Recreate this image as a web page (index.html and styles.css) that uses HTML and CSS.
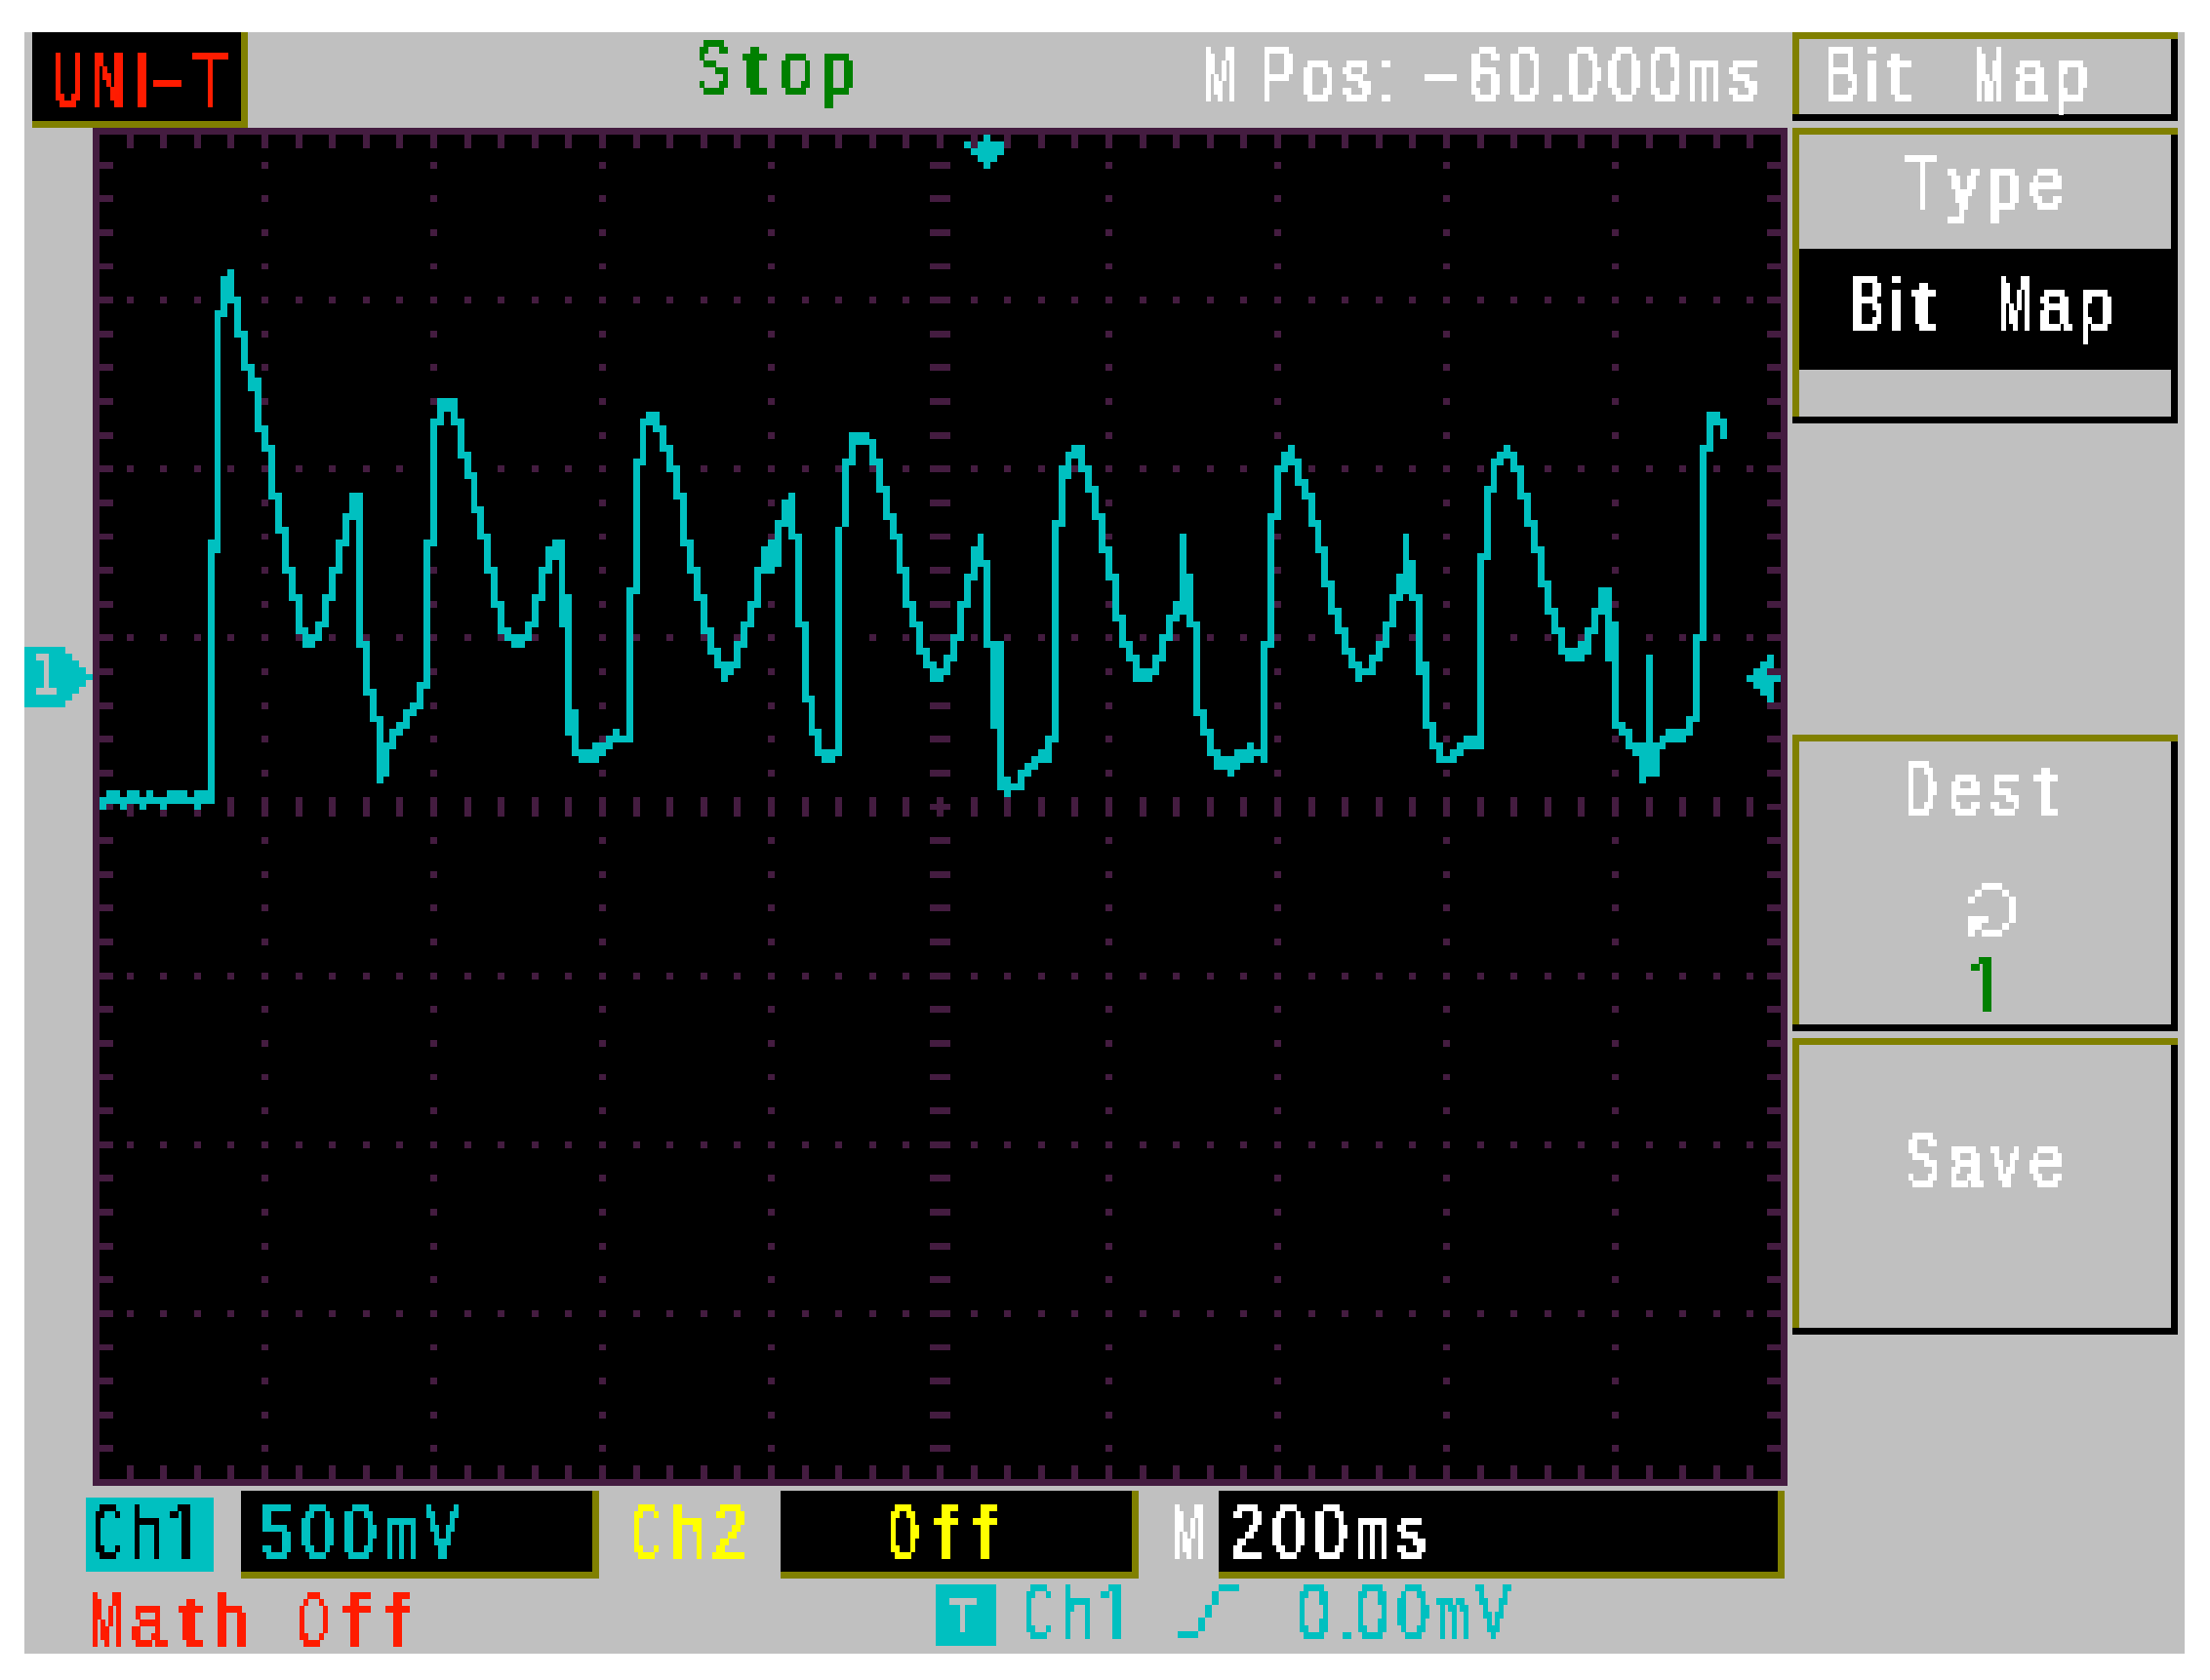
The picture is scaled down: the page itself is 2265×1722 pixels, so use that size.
FILE: index.html
```html
<!DOCTYPE html>
<html lang="en">
<head>
<meta charset="utf-8">
<title>UNI-T oscilloscope</title>
<link rel="stylesheet" href="styles.css">
</head>
<body>
<svg class="defs" width="0" height="0" aria-hidden="true">
  <filter id="px" x="0" y="0" width="100%" height="100%" color-interpolation-filters="sRGB" primitiveUnits="userSpaceOnUse">
    <feFlood x="1" y="6" width="1" height="1" flood-color="#000"/>
    <feComposite width="4" height="7"/>
    <feTile result="dots"/>
    <feComposite in="SourceGraphic" in2="dots" operator="in"/>
    <feComponentTransfer><feFuncA type="discrete" tableValues="0 1 1"/></feComponentTransfer>
    <feMorphology operator="dilate" radius="2 3"/>
  </filter>
</svg>
<main class="lcd">
  <div class="main-col">
    <header class="top">
      <div class="logo"><div class="txt logo-text"><span class="g"><span class="c w">U</span><span class="c w">N</span><span class="c li">I</span><span class="c d dl">-</span><span class="c tt">T</span></span></div></div>
      <div class="txt status"><span class="g roomy"><span class="c b">S</span><span class="c n">t</span>op</span></div>
      <div class="txt mpos"><span class="g"><span class="c m">M</span> <span class="c b">P</span>os: <span class="c d">-</span>60<span class="c dot">.</span>000<span class="c m">m</span>s</span></div>
    </header>
    <div class="scope">
      <svg class="screen" viewBox="10 14 251 201" preserveAspectRatio="none" shape-rendering="crispEdges">
        <rect class="bg" x="10" y="14" width="251" height="201"/>
        <path class="wave-fill" d="M142 15h1v1h-1zM139 16h7v1h-7zM140 17h5v1h-5zM141 18h3v1h-3zM142 19h1v1h-1zM255 95h5v1h-5zM256 94h3v3h-3zM257 93h2v5h-2zM258 92h1v7h-1z"/>
        <rect class="frame" x="10.5" y="14.5" width="250" height="200"/>
        <path class="g1" d="M35.5 19V210M60.5 19V210M85.5 19V210M110.5 19V210M160.5 19V210M185.5 19V210M210.5 19V210M235.5 19V210M15 39.5H256M15 64.5H256M15 89.5H256M15 139.5H256M15 164.5H256M15 189.5H256"/>
        <path class="g2" d="M15 16H256M15 213H256M12 19V210M259 19V210"/>
        <path class="g3" d="M15 114.5H256M135.5 19V210"/>
        <path class="wave-fill" d="M11 113h1v2h-1zM12 112h1v2h-1zM13 112h1v2h-1zM14 113h1v2h-1zM15 112h1v2h-1zM16 112h1v2h-1zM17 113h1v2h-1zM18 112h1v2h-1zM19 113h1v1h-1zM20 113h1v2h-1zM21 112h1v2h-1zM22 112h1v2h-1zM23 112h1v2h-1zM24 113h1v1h-1zM25 112h1v3h-1zM26 112h1v2h-1zM27 75h1v39h-1zM28 41h1v36h-1zM29 36h1v6h-1zM30 35h1v5h-1zM31 39h1v6h-1zM32 44h1v6h-1zM33 49h1v4h-1zM34 51h1v8h-1zM35 58h1v4h-1zM36 61h1v8h-1zM37 68h1v6h-1zM38 73h1v7h-1zM39 79h1v5h-1zM40 83h1v6h-1zM41 88h1v3h-1zM42 89h1v2h-1zM43 87h1v3h-1zM44 83h1v5h-1zM45 79h1v5h-1zM46 75h1v5h-1zM47 71h1v5h-1zM48 68h1v4h-1zM49 68h1v23h-1zM50 90h1v8h-1zM51 97h1v5h-1zM52 101h1v10h-1zM53 105h1v5h-1zM54 103h1v3h-1zM55 102h1v2h-1zM56 100h1v3h-1zM57 99h1v2h-1zM58 96h1v4h-1zM59 75h1v22h-1zM60 57h1v19h-1zM61 54h1v4h-1zM62 54h1v2h-1zM63 54h1v4h-1zM64 57h1v6h-1zM65 62h1v4h-1zM66 65h1v6h-1zM67 70h1v5h-1zM68 74h1v6h-1zM69 79h1v6h-1zM70 84h1v5h-1zM71 88h1v2h-1zM72 89h1v2h-1zM73 89h1v2h-1zM74 87h1v3h-1zM75 83h1v5h-1zM76 79h1v5h-1zM77 76h1v4h-1zM78 75h1v3h-1zM79 75h1v13h-1zM80 83h1v21h-1zM81 100h1v7h-1zM82 106h1v2h-1zM83 106h1v2h-1zM84 105h1v3h-1zM85 105h1v2h-1zM86 104h1v2h-1zM87 103h1v2h-1zM88 104h1v1h-1zM89 82h1v23h-1zM90 63h1v20h-1zM91 57h1v7h-1zM92 56h1v2h-1zM93 56h1v3h-1zM94 58h1v4h-1zM95 61h1v4h-1zM96 64h1v5h-1zM97 68h1v8h-1zM98 75h1v5h-1zM99 79h1v5h-1zM100 83h1v6h-1zM101 88h1v4h-1zM102 91h1v3h-1zM103 93h1v3h-1zM104 93h1v2h-1zM105 90h1v4h-1zM106 87h1v4h-1zM107 84h1v4h-1zM108 79h1v6h-1zM109 76h1v4h-1zM110 75h1v5h-1zM111 72h1v7h-1zM112 69h1v4h-1zM113 68h1v7h-1zM114 74h1v14h-1zM115 87h1v12h-1zM116 98h1v6h-1zM117 103h1v4h-1zM118 106h1v2h-1zM119 106h1v2h-1zM120 73h1v34h-1zM121 63h1v10h-1zM122 59h1v5h-1zM123 59h1v2h-1zM124 59h1v2h-1zM125 60h1v4h-1zM126 63h1v5h-1zM127 67h1v5h-1zM128 71h1v4h-1zM129 74h1v6h-1zM130 79h1v6h-1zM131 84h1v4h-1zM132 87h1v5h-1zM133 91h1v3h-1zM134 93h1v3h-1zM135 94h1v2h-1zM136 92h1v3h-1zM137 89h1v4h-1zM138 84h1v6h-1zM139 80h1v5h-1zM140 76h1v5h-1zM141 74h1v5h-1zM142 78h1v13h-1zM143 90h1v13h-1zM144 90h1v22h-1zM145 110h1v3h-1zM146 111h1v1h-1zM147 109h1v3h-1zM148 108h1v2h-1zM149 107h1v2h-1zM150 106h1v2h-1zM151 104h1v4h-1zM152 72h1v33h-1zM153 64h1v9h-1zM154 62h1v4h-1zM155 61h1v2h-1zM156 61h1v4h-1zM157 64h1v4h-1zM158 67h1v5h-1zM159 71h1v6h-1zM160 76h1v5h-1zM161 80h1v7h-1zM162 86h1v5h-1zM163 90h1v3h-1zM164 92h1v4h-1zM165 94h1v2h-1zM166 94h1v2h-1zM167 92h1v3h-1zM168 89h1v4h-1zM169 86h1v4h-1zM170 84h1v3h-1zM171 74h1v12h-1zM172 80h1v8h-1zM173 87h1v14h-1zM174 100h1v4h-1zM175 103h1v4h-1zM176 106h1v3h-1zM177 107h1v2h-1zM178 107h1v3h-1zM179 106h1v3h-1zM180 106h1v2h-1zM181 105h1v3h-1zM182 106h1v1h-1zM183 90h1v18h-1zM184 71h1v20h-1zM185 64h1v8h-1zM186 62h1v3h-1zM187 61h1v3h-1zM188 63h1v4h-1zM189 66h1v3h-1zM190 68h1v5h-1zM191 72h1v5h-1zM192 76h1v6h-1zM193 81h1v5h-1zM194 85h1v4h-1zM195 88h1v4h-1zM196 91h1v3h-1zM197 93h1v3h-1zM198 94h1v1h-1zM199 92h1v3h-1zM200 90h1v3h-1zM201 87h1v4h-1zM202 83h1v5h-1zM203 80h1v4h-1zM204 74h1v9h-1zM205 78h1v6h-1zM206 83h1v12h-1zM207 93h1v10h-1zM208 102h1v4h-1zM209 105h1v3h-1zM210 107h1v1h-1zM211 106h1v2h-1zM212 105h1v2h-1zM213 104h1v2h-1zM214 104h1v2h-1zM215 77h1v29h-1zM216 67h1v11h-1zM217 63h1v5h-1zM218 62h1v2h-1zM219 61h1v2h-1zM220 62h1v3h-1zM221 64h1v5h-1zM222 68h1v5h-1zM223 72h1v5h-1zM224 76h1v6h-1zM225 81h1v5h-1zM226 85h1v4h-1zM227 88h1v4h-1zM228 91h1v2h-1zM229 91h1v2h-1zM230 90h1v3h-1zM231 88h1v4h-1zM232 85h1v4h-1zM233 82h1v4h-1zM234 82h1v11h-1zM235 87h1v16h-1zM236 102h1v2h-1zM237 103h1v3h-1zM238 105h1v2h-1zM239 105h1v6h-1zM240 92h1v18h-1zM241 105h1v5h-1zM242 104h1v2h-1zM243 103h1v2h-1zM244 103h1v2h-1zM245 103h1v2h-1zM246 101h1v3h-1zM247 89h1v13h-1zM248 61h1v29h-1zM249 56h1v6h-1zM250 56h1v2h-1zM251 57h1v3h-1z"/>
      </svg>
      <div class="ch-marker">
        <svg class="ch-shape" viewBox="0 0 10 9" preserveAspectRatio="none" shape-rendering="crispEdges"><path class="wave-fill" d="M0 0h6v1h1v1h1v1h1v1h1v1h-1v1h-1v1h-1v1h-1v1H0z"/></svg>
        <div class="txt ch-num"><span class="g">1</span></div>
      </div>
    </div>
    <div class="readouts">
      <div class="row1">
        <div class="badge"><div class="txt tight"><span class="g ch"><span class="c w">C</span>h<span class="r">1</span></span></div></div>
        <div class="box box-v"><div class="txt cy v500"><span class="g roomy"><span>500</span><span class="c m">m</span><span class="c b">V</span></span></div></div>
        <div class="txt ye ch2"><span class="g"><span class="c w">C</span>h2</span></div>
        <div class="box box-off"><div class="txt ye off"><span class="g"><span class="c o">O</span><span class="c n">f</span><span class="c n">f</span></span></div></div>
        <div class="txt wh mlabel"><span class="g"><span class="c m">M</span></span></div>
        <div class="box box-t"><div class="txt wh t200"><span class="g roomy">200<span class="c m">m</span>s</span></div></div>
      </div>
      <div class="row2">
        <div class="txt rd math"><span class="g roomy"><span class="c m">M</span>a<span class="c n">t</span>h <span class="c o">O</span><span class="c n">f</span><span class="c n">f</span></span></div>
        <div class="tbox"><div class="txt tglyph"><span class="g">T</span></div></div>
        <div class="txt cy trig-ch"><span class="g ch"><span class="c w">C</span>h<span class="r">1</span></span></div>
        <svg class="edge" viewBox="0 0 9 8" preserveAspectRatio="none" shape-rendering="crispEdges"><path class="wave-fill" d="M6 0h3v1H6zM5 1h1v2H5zM4 3h1v2H4zM3 5h1v2H3zM0 7h3v1H0z"/></svg>
        <div class="txt cy trig-v"><span class="g">0<span class="c dot">.</span>00<span class="c m">m</span><span class="c b">V</span></span></div>
      </div>
    </div>
  </div>
  <aside class="menu">
    <div class="key key-title"><div class="txt wh ktitle"><span class="g bm"><span class="c b">B</span><span class="c">i</span><span class="c wt">t</span>  <span class="c m">M</span>ap</span></div></div>
    <div class="key key-type">
      <div class="txt wh kcenter"><span class="g wide"><span class="c tt">T</span>ype</span></div>
      <div class="selected"><div class="txt wh kcenter"><span class="g bm"><span class="c b">B</span><span class="c">i</span><span class="c wt">t</span>  <span class="c m">M</span>ap</span></div></div>
    </div>
    <div class="key key-dest">
      <div class="txt wh kcenter"><span class="g wide"><span class="c w">D</span>es<span class="c n">t</span></span></div>
      <svg class="cycle" viewBox="0 0 7 8" preserveAspectRatio="none" shape-rendering="crispEdges"><path class="cycle-path" d="M2 0h3v1H2zM1 1h1v1H1zM5 1h1v1H5zM0 2h1v1H0zM6 2h1v4H6zM0 5h3v1H0zM0 6h2v1H0zM5 6h1v1H5zM0 7h1v1H0zM2 7h3v1H2z"/></svg>
      <div class="txt gr kcenter dest-val"><span class="g r">1</span></div>
    </div>
    <div class="key key-save"><div class="txt wh kcenter"><span class="g wide"><span class="c b">S</span>ave</span></div></div>
  </aside>
</main>
</body>
</html>
```
FILE: styles.css
```css
html, body { margin: 0; padding: 0; background: #fff; }
.defs { position: absolute; }
.lcd {
  display: flex;
  width: 2214px;
  height: 1662px;
  margin: 33px 0 0 25px;
  background: #c0c0c0;
}
.main-col { width: 1812px; flex: none; }

/* bitmap-font look: real text, narrowed, then sampled onto the LCD's pixel grid */
.txt {
  font-family: "Liberation Sans", sans-serif;
  font-size: 77px;
  line-height: 77px;
  white-space: pre;
  padding-bottom: 14px;
  filter: url(#px);
  flex: none;
  -webkit-text-stroke: 1px currentColor;
}
.g {
  --ls: 9px;
  display: inline-block;
  letter-spacing: var(--ls);
  transform: scaleX(.8);
  transform-origin: 0 50%;
}
.ch { --ls: 5px; }
.roomy { --ls: 10.5px; }
.wide { --ls: 11.5px; margin-left: 8px; }
.kcenter { text-align: center; }
.kcenter .g { transform-origin: 50% 50%; }
.bm { word-spacing: 10px; }
.r { font-family: Roboto, "Liberation Sans", sans-serif; }

/* glyph cells that keep the font near monospaced */
.c {
  display: inline-block;
  margin-right: var(--ls);
  letter-spacing: 0;
  transform-origin: 0 50%;
}
.w { transform: scaleX(.7); margin-right: calc(var(--ls) - .166em); }
.o { transform: scaleX(.66); margin-right: calc(var(--ls) - .222em); }
.b { transform: scaleX(.82); margin-right: calc(var(--ls) - .111em); }
.tt { transform: scaleX(.9); margin-right: calc(var(--ls) - .055em); }
.m { transform: scaleX(.64); margin-right: calc(var(--ls) - .277em); }
.d { transform: scaleX(2); margin-right: 35.6px; }
.dl { transform: scaleX(1.8); margin-right: 31px; }
.n { width: .556em; text-align: center; transform: scaleX(1.4); transform-origin: 50% 50%; }
.wt { transform: scaleX(1.4); }
.li { margin-right: -1px; }
.dot { margin-right: 2px; }

.wh { color: #fff; }
.cy { color: #00c0c0; }
.ye { color: #ffff00; }
.rd { color: #ff1c00; }
.gr { color: #008000; }

/* top bar */
.top { display: flex; align-items: flex-start; height: 98px; }
.logo {
  width: 214px;
  height: 91px;
  margin-left: 8px;
  background: #000;
  border-right: 7px solid #808000;
  border-bottom: 7px solid #808000;
  flex: none;
}
.logo-text { color: #ff1c00; margin: 11px 0 0 21px; width: 193px; }
.status { color: #008000; width: 222px; margin: -2px -22px 0 460px; }
.mpos { color: #fff; width: 590px; margin: 5px 0 0 319px; word-spacing: -8px; }

/* scope */
.scope { position: relative; height: 1392px; padding-left: 70px; }
.screen { display: block; width: 1737px; height: 1392px; }
.bg { fill: #000; }
.frame { fill: none; stroke: #441c40; stroke-width: 1; }
.g1, .g2, .g3 { fill: none; stroke: #441c40; stroke-dasharray: 1 4; }
.g1 { stroke-width: 1; }
.g2 { stroke-width: 2; }
.g3 { stroke-width: 3; }
.wave-fill { fill: #00c0c0; }
.ch-marker { position: absolute; left: 0; top: 532px; width: 70px; height: 62px; }
.ch-shape { display: block; width: 70px; height: 62px; }
.ch-num {
  position: absolute;
  left: 9px;
  top: -3px;
  width: 40px;
  color: #c0c0c0;
  font-size: 57px;
  line-height: 57px;
}

/* readouts */
.readouts { padding-top: 5px; }
.row1 { display: flex; align-items: flex-start; height: 90px; }
.row2 { display: flex; align-items: flex-start; margin-top: 6px; }
.badge {
  width: 131px;
  height: 76px;
  margin: 7px 0 0 63px;
  background: #00c0c0;
  flex: none;
  color: #000;
}
.tight { margin: -3px 0 0 7px; width: 124px; }
.box {
  height: 83px;
  background: #000;
  border-right: 7px solid #808000;
  border-bottom: 7px solid #808000;
  flex: none;
}
.box .txt { margin-top: 4px; }
.box-v { width: 360px; margin-left: 28px; }
.v500 { margin-left: 19px; width: 280px; }
.ch2 { width: 160px; margin: 4px -38px 0 33px; }
.box-off { width: 360px; margin-left: 31px; }
.off { margin-left: 110px; width: 200px; }
.mlabel { width: 40px; margin: 4px 0 0 34px; }
.box-t { width: 573px; margin-left: 8px; }
.t200 { margin-left: 12px; width: 280px; }
.math { width: 450px; margin: -2px -110px 0 67px; }
.math .g { word-spacing: 22px; }
.tbox {
  width: 62px;
  height: 63px;
  margin-left: 527px;
  background: #00c0c0;
  flex: none;
}
.tglyph {
  color: #c0c0c0;
  font-size: 46px;
  line-height: 46px;
  width: 40px;
  margin: 11px 0 0 14px;
}
.tglyph .g { transform: none; letter-spacing: 0; }
.trig-ch { width: 140px; margin: -10px -25px 0 28px; }
.edge { display: block; width: 63px; height: 55px; margin-left: 43px; flex: none; }
.trig-v { width: 290px; margin: -10px 0 0 59px; }

/* soft keys */
.menu { width: 395px; flex: none; }
.key {
  background: #c0c0c0;
  box-sizing: border-box;
  box-shadow: inset 0 7px 0 #808000, inset 0 -7px 0 #000, inset 7px 0 0 #808000, inset -7px 0 0 #000;
}
.key-title { height: 91px; margin-bottom: 7px; padding-top: 5px; }
.ktitle { margin-left: 34px; width: 350px; }
.key-type { height: 303px; padding-top: 18px; }
.selected { height: 124px; margin: 15px 7px 0; background: #000; padding-top: 18px; box-sizing: border-box; }
.key-dest { height: 304px; margin-top: 319px; padding-top: 17px; }
.cycle { display: block; width: 49px; height: 55px; margin: 44px 0 0 180px; }
.cycle-path { fill: #fff; }
.dest-val { margin-top: 11px; padding-left: 6px; }
.key-save { height: 304px; margin-top: 7px; padding-top: 87px; }
```
